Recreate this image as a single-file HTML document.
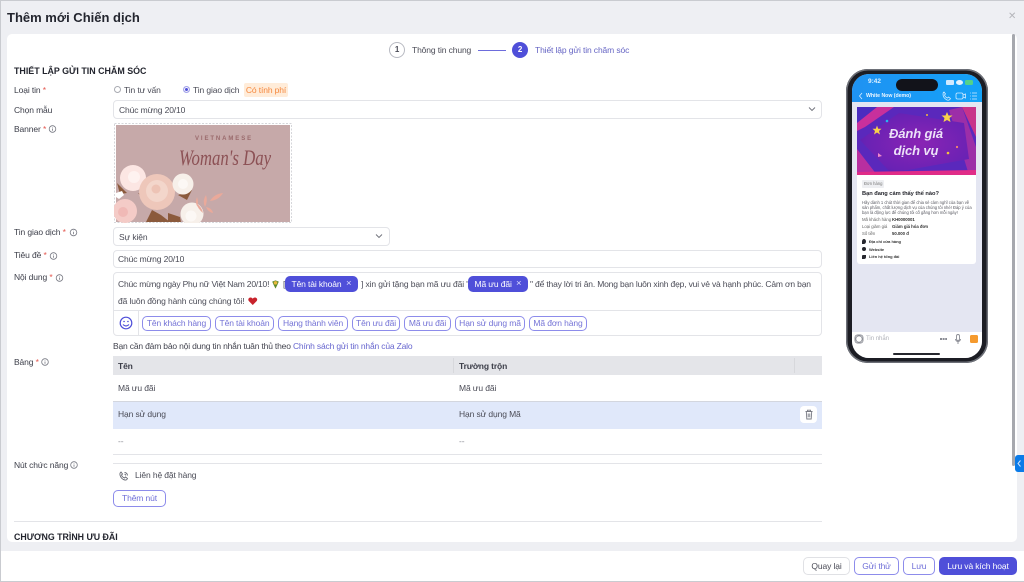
<!DOCTYPE html>
<html lang="vi"><head><meta charset="utf-8"><title>Thêm mới Chiến dịch</title>
<style>
*{box-sizing:border-box}
html,body{margin:0;padding:0;width:1024px;height:582px;overflow:hidden;background:#fff}
body{font-family:"Liberation Sans",sans-serif;font-size:8.5px;letter-spacing:-.12px;color:#4b4c57;position:relative}
#w{position:absolute;left:0;top:0;width:1024px;height:582px;filter:blur(.35px)}
.a{position:absolute}
.t{position:absolute;white-space:nowrap;line-height:12px}
.l{color:#3c3e49}
.r{color:#e4574f}
.b{position:absolute;border:1px solid #e3e4e8;border-radius:4px;background:#fff}
.chip{position:absolute;top:316px;height:15px;border:1px solid #8d8ceb;border-radius:5px;color:#7473d6;line-height:13px;text-align:center;white-space:nowrap;background:#fff}
.tag{position:absolute;top:276px;height:16px;background:#4f4fd9;border-radius:5px;color:#fff;line-height:16px;white-space:nowrap;padding-left:6.500px}
.tag i{position:absolute;top:0;font-style:normal;color:#d8d8ff;font-size:9.500px}
.btn{position:absolute;top:557px;height:18px;border-radius:5px;line-height:16px;text-align:center;border:1px solid #8d8ceb;color:#6f6ed8;background:#fff;white-space:nowrap}
#p .t{letter-spacing:-.02px}
</style></head><body><div id="w">
<div class="a" style="left:0;top:0;width:1024px;height:551px;background:#eeeff3"></div>
<div class="a" style="left:0;top:0;width:1024px;height:1px;background:#c9cbd0"></div>
<div class="a" style="left:0;top:551px;width:1024px;height:30px;background:#fff"></div>
<div class="a" style="left:0;top:581px;width:1024px;height:1px;background:#c9cbd0"></div>
<div class="a" style="left:0;top:0;width:1px;height:582px;background:#c9cbd0"></div>
<div class="t" style="left:7px;top:9px;font-size:13px;letter-spacing:0;line-height:17px;font-weight:bold;color:#23252e">Thêm mới Chiến dịch</div>
<div class="t" style="left:1008px;top:11px;font-size:10px;color:#b4b5ba">✕</div>
<div class="a" style="left:7px;top:34px;width:1010px;height:508px;background:#fff;border-radius:5px"></div>
<div class="a" style="left:1012px;top:34px;width:3px;height:432px;background:#a6a8ae;border-radius:2px"></div>
<div class="a" style="left:1015px;top:455px;width:9px;height:17px;background:#0a7be8;border-radius:3px 0 0 3px"></div>
<svg class="a" style="left:1016px;top:459px" width="7" height="9" viewBox="0 0 7 9"><path d="M4.500 1.500L2 4.500l2.500 3" fill="none" stroke="#cfe4ff" stroke-width="1"/></svg>

<!-- stepper -->
<div class="a" style="left:389px;top:42px;width:16px;height:16px;border:1px solid #b8bac2;border-radius:50%;text-align:center;line-height:14px;font-size:8px;font-weight:bold;color:#4b4c57">1</div>
<div class="t" style="left:412px;top:44px">Thông tin chung</div>
<div class="a" style="left:478px;top:50px;width:28px;height:1px;background:#6d6cdc"></div>
<div class="a" style="left:512px;top:42px;width:16px;height:16px;border-radius:50%;background:#4f4fd9;text-align:center;line-height:16px;font-size:8px;font-weight:bold;color:#fff">2</div>
<div class="t" style="left:535px;top:44px;color:#6665c4">Thiết lập gửi tin chăm sóc</div>

<div class="t" style="left:14px;top:65px;font-size:8.900px;letter-spacing:0;font-weight:bold;color:#23252e">THIẾT LẬP GỬI TIN CHĂM SÓC</div>

<!-- labels -->
<div class="t l" style="left:14px;top:84px">Loại tin <span class="r">*</span></div>
<div class="t l" style="left:14px;top:104px">Chọn mẫu</div>
<div class="t l" style="left:14px;top:123px">Banner <span class="r">*</span></div>
<div class="t l" style="left:14px;top:226px">Tin giao dịch <span class="r">*</span></div>
<div class="t l" style="left:14px;top:249px">Tiêu đề <span class="r">*</span></div>
<div class="t l" style="left:14px;top:271px">Nội dung <span class="r">*</span></div>
<div class="t l" style="left:14px;top:356px">Bảng <span class="r">*</span></div>
<div class="t l" style="left:14px;top:459px">Nút chức năng</div>
<svg class="a" style="left:0;top:0" width="90" height="480" fill="none" stroke="#777983" stroke-width=".8">
<circle cx="52.500" cy="129" r="3.300"/><path d="M52.500 128.500v2.200M52.500 127.200v.6"/>
<circle cx="73.500" cy="232.500" r="3.300"/><path d="M73.500 232v2.200M73.500 230.700v.6"/>
<circle cx="53.500" cy="256" r="3.300"/><path d="M53.500 255.500v2.200M53.500 254.200v.6"/>
<circle cx="59.500" cy="278" r="3.300"/><path d="M59.500 277.500v2.200M59.500 276.200v.6"/>
<circle cx="45" cy="362" r="3.300"/><path d="M45 361.500v2.200M45 360.200v.6"/>
<circle cx="74" cy="465" r="3.300"/><path d="M74 464.500v2.200M74 463.200v.6"/>
</svg>

<!-- radios -->
<div class="a" style="left:114px;top:86px;width:7px;height:7px;border:1px solid #a9abb2;border-radius:50%"></div>
<div class="t" style="left:124px;top:84px">Tin tư vấn</div>
<div class="a" style="left:183px;top:86px;width:7px;height:7px;border:1px solid #a4a4ea;border-radius:50%;background:#4f4fd9;box-shadow:inset 0 0 0 1px #fff"></div>
<div class="t" style="left:193px;top:84px">Tin giao dịch</div>
<div class="t" style="left:244px;top:83px;width:44px;height:14px;line-height:14px;background:#ffecd9;border-radius:2px;color:#f5873d;text-align:center">Có tính phí</div>

<!-- chọn mẫu -->
<div class="b" style="left:113px;top:100px;width:709px;height:19px"></div>
<div class="t" style="left:119px;top:104px">Chúc mừng 20/10</div>
<svg class="a" style="left:808px;top:106px" width="8" height="6"><path d="M1 1.500l3 3 3-3" fill="none" stroke="#6d6f78" stroke-width=".9"/></svg>

<!-- banner -->
<svg class="a" style="left:114px;top:123px" width="178" height="100" viewBox="0 0 178 100">
<rect x=".5" y=".5" width="177" height="99" fill="#fff" stroke="#d5d6da" stroke-dasharray="2 1.500"/>
<rect x="2" y="2" width="174" height="97" fill="#c6a9a9"/>
<text x="81" y="17" font-family="Liberation Sans" font-size="6" font-weight="bold" letter-spacing="1.900" fill="#9a6a6c">VIETNAMESE</text>
<text transform="translate(65 42) scale(1 1.300)" font-family="Liberation Serif" font-style="italic" font-size="16.800" letter-spacing="0" fill="#8c5155">Woman's Day</text>
<path d="M3 60l10 10-7 1zM24 70l14 5-7 3zM64 72l14-5-5 10zM32 99l6-12 9 5 9 7zM54 90l12 4 1 5H54z" fill="#8b5a3c"/>
<circle cx="19" cy="55" r="13" fill="#fce6e3"/><circle cx="20" cy="54" r="6" fill="#fef2f0"/>
<circle cx="43" cy="69" r="18" fill="#eec7ba"/><circle cx="43" cy="68" r="11" fill="#f3d6cb"/><circle cx="42" cy="66" r="4.500" fill="#edc3b5"/>
<circle cx="69" cy="61" r="10.500" fill="#f7f0ea"/><circle cx="69" cy="61" r="5" fill="#fcf8f5"/>
<circle cx="11" cy="88" r="12" fill="#f4cbc7"/><circle cx="9" cy="89" r="5" fill="#f0b9b6"/>
<circle cx="78" cy="91" r="11.500" fill="#f7f0ea"/><circle cx="77" cy="93" r="5.500" fill="#fcf8f5"/>
<path d="M2 70l6-2 2 4-5 4-3-2z" fill="#fff"/>
<path d="M96 78q9-1 13-8-9 1-13 8zM92 72q-4 6-1 12 3-6 1-12zM92 84q2 5 7 6-1-5-7-6zM83 74q-2 5 0 9 2-4 0-9zM82 80q2 6 7 10-1-6-7-10z" fill="#eaa99a"/>
</svg>

<!-- select -->
<div class="b" style="left:113px;top:227px;width:277px;height:19px"></div>
<div class="t" style="left:119px;top:231px">Sự kiện</div>
<svg class="a" style="left:375px;top:233px" width="8" height="6"><path d="M1 1.500l3 3 3-3" fill="none" stroke="#6d6f78" stroke-width=".9"/></svg>

<div class="b" style="left:113px;top:250px;width:709px;height:18px"></div>
<div class="t" style="left:118px;top:253px">Chúc mừng 20/10</div>

<!-- nội dung -->
<div class="b" style="left:113px;top:272px;width:709px;height:64px"></div>
<div class="a" style="left:114px;top:310px;width:707px;height:1px;background:#e3e4e8"></div>
<div class="a" style="left:138px;top:311px;width:1px;height:24px;background:#e3e4e8"></div>
<div class="t" style="left:118px;top:278px;letter-spacing:-.2px">Chúc mừng ngày Phụ nữ Việt Nam 20/10!</div>
<svg class="a" style="left:271px;top:280px" width="9" height="9" viewBox="0 0 11 11"><path d="M1.500 2l4-1.500L9.500 2 8 5.500 5.500 10.500 3 5.500z" fill="#5d8a2e"/><circle cx="5.500" cy="3.500" r="2.200" fill="#e8b93a"/></svg>
<div class="t" style="left:283px;top:278px">[</div>
<div class="tag" style="left:285px;width:73px">Tên tài khoản<i style="left:61px">×</i></div>
<div class="t" style="left:361px;top:278px">] xin gửi tặng bạn mã ưu đãi "</div>
<div class="tag" style="left:468px;width:60px">Mã ưu đãi<i style="left:48px">×</i></div>
<div class="t" style="left:530px;top:278px;letter-spacing:-.17px">" để thay lời tri ân. Mong bạn luôn xinh đẹp, vui vẻ và hạnh phúc. Cảm ơn bạn</div>
<div class="t" style="left:118px;top:295px">đã luôn đồng hành cùng chúng tôi!</div>
<svg class="a" style="left:248px;top:296.500px" width="9.500" height="8.500" viewBox="0 0 10 9"><path d="M5 8.500L.8 4.200C-.5 2.500.8.500 2.700.500 3.800.500 4.500 1 5 1.800 5.500 1 6.200.500 7.300.500c1.900 0 3.200 2 1.900 3.700z" fill="#c8232c"/></svg>
<svg class="a" style="left:119px;top:316px" width="14" height="14" viewBox="0 0 14 14" fill="none" stroke="#4f4fd9" stroke-width="1.200"><circle cx="7" cy="7" r="5.800"/><path d="M4 8.500q3 3 6 0"/><path d="M4.300 5.500h1.500M8.200 5.500h1.500"/></svg>
<div class="chip" style="left:142px;width:69px">Tên khách hàng</div>
<div class="chip" style="left:215px;width:59px">Tên tài khoản</div>
<div class="chip" style="left:278px;width:70px">Hạng thành viên</div>
<div class="chip" style="left:352px;width:48px">Tên ưu đãi</div>
<div class="chip" style="left:404px;width:47px">Mã ưu đãi</div>
<div class="chip" style="left:455px;width:70px">Hạn sử dụng mã</div>
<div class="chip" style="left:529px;width:58px">Mã đơn hàng</div>

<div class="t" style="left:113px;top:340px;color:#43444f;letter-spacing:-.18px">Bạn cần đảm bảo nội dung tin nhắn tuân thủ theo <span style="color:#6766cf">Chính sách gửi tin nhắn của Zalo</span></div>

<!-- table -->
<div class="a" style="left:113px;top:356px;width:709px;height:19px;background:#e4e5e9"></div>
<div class="a" style="left:453px;top:358px;width:1px;height:15px;background:#d7d8dc"></div>
<div class="a" style="left:794px;top:358px;width:1px;height:15px;background:#d7d8dc"></div>
<div class="t" style="left:118px;top:360px;font-weight:bold;color:#3c3e49">Tên</div>
<div class="t" style="left:459px;top:360px;font-weight:bold;color:#3c3e49">Trường trộn</div>
<div class="t" style="left:118px;top:382px">Mã ưu đãi</div>
<div class="t" style="left:459px;top:382px">Mã ưu đãi</div>
<div class="a" style="left:113px;top:401px;width:709px;height:28px;background:#e0e8fa;border-top:1px solid #d3d6de"></div>
<div class="t" style="left:118px;top:408px">Hạn sử dụng</div>
<div class="t" style="left:459px;top:408px">Hạn sử dụng Mã</div>
<div class="a" style="left:800px;top:406px;width:17px;height:17px;background:#fff;border-radius:4px"></div>
<svg class="a" style="left:804px;top:409px" width="10" height="11" viewBox="0 0 10 11" fill="none" stroke="#7a7c85" stroke-width=".9"><path d="M1.500 2.500h7M3.500 2.500V1.200h3v1.300M2.300 2.500l.5 7.500h4.400l.5-7.500M4.200 4.500v3.800M5.800 4.500v3.800"/></svg>
<div class="t" style="left:118px;top:435px;color:#8a8b93">--</div>
<div class="t" style="left:459px;top:435px;color:#8a8b93">--</div>
<div class="a" style="left:113px;top:454px;width:709px;height:1px;background:#e3e4e8"></div>
<div class="a" style="left:113px;top:463px;width:709px;height:1px;background:#e3e4e8"></div>

<svg class="a" style="left:119px;top:471px" width="10" height="10" viewBox="0 0 10 10" fill="none" stroke="#666872" stroke-width=".9"><path d="M2 1l1.500 2-1 1c.5 1.500 1.500 2.500 3 3l1-1 2 1.500c-.5 1.200-1.500 1.700-2.500 1.500C3.500 8.500 1.500 6.500 1 4 .800 2.800 1 1.600 2 1z"/><path d="M5.500 1.500a3 3 0 0 1 3 3M5.500 3.200a1.500 1.500 0 0 1 1.300 1.300"/></svg>
<div class="t" style="left:135px;top:469px">Liên hệ đặt hàng</div>
<div class="a" style="left:113px;top:490px;width:53px;height:17px;border:1px solid #8d8ceb;border-radius:5px;text-align:center;line-height:14px;color:#6f6ed8">Thêm nút</div>
<div class="a" style="left:14px;top:521px;width:808px;height:1px;background:#e3e4e8"></div>
<div class="t" style="left:14px;top:531px;font-size:8.800px;letter-spacing:0;font-weight:bold;color:#23252e;height:11px;overflow:hidden">CHƯƠNG TRÌNH ƯU ĐÃI</div>

<!-- phone -->
<div class="a" style="left:846px;top:69px;width:142px;height:294px;background:#1c1d24;border-radius:22px;box-shadow:inset 0 0 0 1.500px #6d7078"></div>
<div id="p" class="a" style="left:852px;top:74px;width:130px;height:284px;border-radius:17px;overflow:hidden;background:#e4e6f2">
 <div class="a" style="left:0;top:0;width:130px;height:28px;background:linear-gradient(90deg,#1f92f2,#14a2f8)"></div>
 <div class="t" style="left:16px;top:3px;font-size:6.500px;font-weight:bold;color:#dff1ff;line-height:10px">9:42</div>
 <div class="a" style="left:44px;top:5px;width:42px;height:12px;background:#12131a;border-radius:6px"></div>
 <div class="a" style="left:94px;top:6px;width:8px;height:5px;background:#cfe9ff;border-radius:1px"></div>
 <div class="a" style="left:104px;top:6px;width:7px;height:5px;background:#e3f3ff;border-radius:50%"></div>
 <div class="a" style="left:113px;top:6px;width:8px;height:5px;background:#53d28a;border-radius:1.500px"></div>
 <svg class="a" style="left:0;top:16px" width="130" height="12" viewBox="0 0 130 12" fill="none" stroke="#d5ecff" stroke-width=".8"><path d="M10 3L7.500 6 10 9"/><path d="M92 2l1.500 2-1 1c.5 1.500 1.500 2.500 3 3l1-1 2 1.500c-.5 1.500-2 2-3.500 1.500C93 9 91 7 91 4c0-1 .3-1.600 1-2z"/><rect x="104" y="3" width="7" height="6" rx="1.500"/><path d="M111 5l2.500-1v4L111 7"/><path d="M120 3h5M120 6h5M120 9h5M118 3h.8M118 6h.8M118 9h.8"/></svg>
 <div class="t" style="left:14px;top:16px;font-size:5.200px;font-weight:bold;color:#e8f5ff;line-height:12px">White Now (demo)</div>
 <div class="a" style="left:5px;top:33px;width:119px;height:157px;background:#fff;border-radius:3px"></div>
 <svg class="a" style="left:5px;top:33px" width="119" height="68" viewBox="0 0 119 68">
  <defs><radialGradient id="g" cx=".55" cy=".5" r=".7"><stop offset="0" stop-color="#8a24b4"/><stop offset=".7" stop-color="#6a22b4"/><stop offset="1" stop-color="#4c22b6"/></radialGradient></defs>
  <rect width="119" height="68" fill="#5a28bc"/>
  <path d="M0 0h20L0 16z" fill="#4a2cc0"/>
  <path d="M20 0h17L8 20 0 24V16z" fill="#c8309c"/>
  <path d="M105 0h14v30z" fill="#c8338a"/>
  <path d="M92 3l13-3 14 40v28h-7z" fill="#9c2ea8"/>
  <path d="M0 42l20 26H0z" fill="#b82fa0"/>
  <path d="M3 33L42 6l65 10 5 36-78 14z" fill="url(#g)"/>
  <path d="M0 65l119-2v5H0z" fill="#e02c88"/>
  <polygon points="90,5 91.500,8.500 95.500,8.500 92.500,11 93.500,15 90,13 86.500,15 87.500,11 84.500,8.500 88.500,8.500" fill="#f8d24a"/>
  <polygon points="20,18.500 21.200,21.800 24.500,21.800 22,24 23,27.500 20,25.500 17,27.500 18,24 15.500,21.800 18.800,21.800" fill="#f8d24a"/>
  <circle cx="30" cy="14" r="1.300" fill="#27b4f0"/><circle cx="70" cy="8" r="1" fill="#f5b93a"/><circle cx="91" cy="46" r="1.300" fill="#f5c63a"/><circle cx="100" cy="40" r="1.100" fill="#f58a6a"/><path d="M21 46l4 3-4 1z" fill="#f08acb"/>
  <text x="59" y="31" text-anchor="middle" font-family="Liberation Sans" font-weight="bold" font-style="italic" font-size="13" fill="#ece2f8">Đánh giá</text>
  <text x="59" y="48" text-anchor="middle" font-family="Liberation Sans" font-weight="bold" font-style="italic" font-size="13" fill="#ece2f8">dịch vụ</text>
 </svg>
 <div class="a" style="left:10px;top:106px;width:22px;height:8px;background:#eeeff2;border-radius:1px"></div>
 <div class="t" style="left:12px;top:106px;font-size:4.200px;line-height:8px;color:#777">Đơn hàng</div>
 <div class="t" style="left:10px;top:116px;font-size:5.700px;line-height:9px;font-weight:bold;color:#26272e">Bạn đang cảm thấy thế nào?</div>
 <div class="t" style="left:10px;top:125.500px;font-size:4.200px;line-height:5.100px;color:#5a5b63">Hãy dành 1 chút thời gian để chia sẻ cảm nghĩ của bạn về<br>sản phẩm, chất lượng dịch vụ của chúng tôi nhé! Đáp ý của<br>bạn là động lực để chúng tôi cố gắng hơn mỗi ngày!</div>
 <div class="t" style="left:10px;top:141.500px;font-size:4.300px;line-height:7px;color:#666">Mã khách hàng</div><div class="t" style="left:40px;top:141.500px;font-size:4.300px;line-height:7px;font-weight:bold;color:#333">KH0000001</div>
 <div class="t" style="left:10px;top:149px;font-size:4.300px;line-height:7px;color:#666">Loại giảm giá</div><div class="t" style="left:40px;top:149px;font-size:4.300px;line-height:7px;font-weight:bold;color:#333">Giảm giá hóa đơn</div>
 <div class="t" style="left:10px;top:156px;font-size:4.300px;line-height:7px;color:#666">Số tiền</div><div class="t" style="left:40px;top:156px;font-size:4.300px;line-height:7px;font-weight:bold;color:#333">50.000 đ</div>
 <div class="a" style="left:10px;top:164.500px;width:4px;height:5px;background:#26272e;border-radius:50% 50% 50% 0"></div>
 <div class="a" style="left:10px;top:173px;width:4px;height:4px;background:#26272e;border-radius:50%"></div>
 <div class="a" style="left:10px;top:180.500px;width:4px;height:4px;background:#26272e;border-radius:1px 0 2px 0"></div>
 <div class="t" style="left:17px;top:163.500px;font-size:4px;line-height:7px;font-weight:bold;color:#333">Địa chỉ cửa hàng</div>
 <div class="t" style="left:17px;top:171.500px;font-size:4px;line-height:7px;font-weight:bold;color:#333">Website</div>
 <div class="t" style="left:17px;top:179px;font-size:4px;line-height:7px;font-weight:bold;color:#333">Liên hệ tổng đài</div>
 <div class="a" style="left:0;top:258px;width:130px;height:26px;background:#fff"></div>
 <svg class="a" style="left:2px;top:258px" width="126" height="14" viewBox="0 0 126 14" fill="none" stroke="#8a8c94" stroke-width=".9"><circle cx="5" cy="7" r="3.200"/><rect x="1" y="3" width="8" height="8" rx="2.500"/><path d="M86 7h7" stroke-dasharray="2 .6" stroke-width="2"/><rect x="102.500" y="2.500" width="3" height="6" rx="1.500"/><path d="M101.500 7a2.500 2.500 0 0 0 5 0M104 10v2"/></svg>
 <div class="a" style="left:118px;top:261px;width:8px;height:8px;background:#f59a2e;border-radius:1.500px"></div>
 <div class="t" style="left:14px;top:261px;font-size:6px;line-height:8px;color:#b0b2b9">Tin nhắn</div>
 <div class="a" style="left:41px;top:279px;width:47px;height:2px;background:#26272e;border-radius:1px"></div>
</div>

<!-- footer -->
<div class="btn" style="left:803px;width:47px;border-color:#e0e1e5;color:#4b4c57">Quay lại</div>
<div class="btn" style="left:854px;width:45px">Gửi thử</div>
<div class="btn" style="left:903px;width:32px">Lưu</div>
<div class="btn" style="left:939px;width:78px;background:#4f4fd9;border-color:#4f4fd9;color:#fff">Lưu và kích hoạt</div>
</div></body></html>
